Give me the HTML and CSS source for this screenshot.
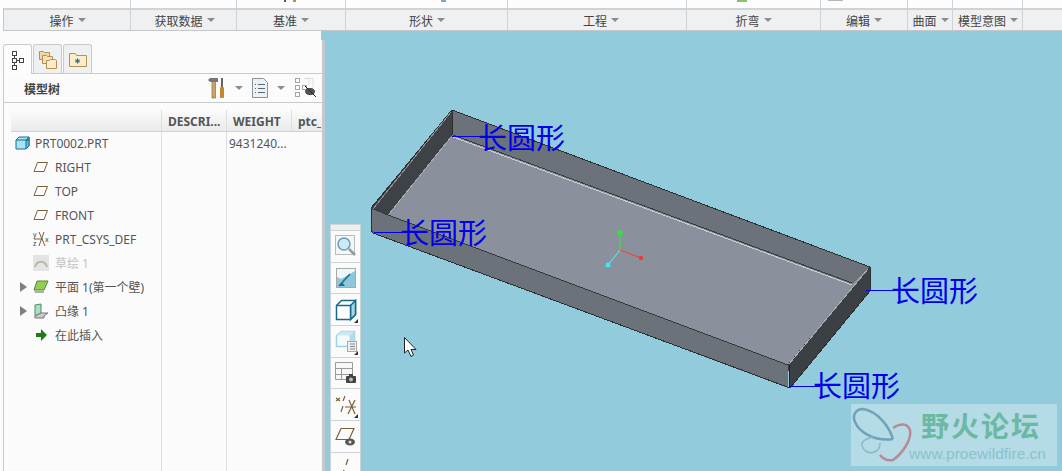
FILE: index.html
```html
<html lang="zh-CN">
<head>
  <meta charset="UTF-8" />
  <title>模型树</title>
  <link rel="stylesheet" href="styles.css">
</head>
<body>
  <div class="ribbon">
    <div class="ribbon-icons">
      <div class="col c1"></div>
      <div class="col c2"></div>
      <div class="col c3"><span class="bit bit-a"></span></div>
      <div class="col c4"><span class="bit bit-b"></span></div>
      <div class="col c5"></div>
      <div class="col c6"><span class="bit bit-c"></span></div>
      <div class="col c7"><span class="bit bit-d"></span></div>
      <div class="col c8"></div>
      <div class="col c9"></div>
      <div class="col c10"></div>
    </div>
    <div class="ribbon-labels">
      <div class="col c1">操作<i class="caret"></i></div>
      <div class="col c2">获取数据<i class="caret"></i></div>
      <div class="col c3">基准<i class="caret"></i></div>
      <div class="col c4">形状<i class="caret"></i></div>
      <div class="col c5">工程<i class="caret"></i></div>
      <div class="col c6">折弯<i class="caret"></i></div>
      <div class="col c7">编辑<i class="caret"></i></div>
      <div class="col c8">曲面<i class="caret"></i></div>
      <div class="col c9">模型意图<i class="caret"></i></div>
      <div class="col c10"></div>
    </div>
  </div>

  <div class="main">
    <div class="side">
      <div class="tabs">
        <div class="tab active">
          <svg width="18" height="20" viewBox="0 0 18 20" fill="none" stroke="#444">
            <rect x="3.5" y="1.5" width="4" height="4"/><rect x="3.5" y="8.5" width="4" height="4"/><rect x="10.5" y="8.5" width="4" height="4"/><rect x="3.5" y="15.5" width="4" height="4"/>
            <path d="M5.5 5.5v3M5.5 12.5v3M7.5 10.5h3"/>
          </svg>
        </div>
        <div class="tab">
          <svg width="22" height="22" viewBox="0 0 22 22" stroke="#b5904f">
            <path d="M2.500 3.500h4l1 1h5v7h-10z" fill="#f1d9a6"/>
            <path d="M5.500 7.500h4l1 1h5v7h-10z" fill="#f4e2ba"/>
            <path d="M9.500 12.500h3l1-1h5l1 1v8h-10z" fill="#fbeccb"/>
          </svg>
        </div>
        <div class="tab">
          <svg width="20" height="18" viewBox="0 0 20 18" stroke="#b5904f">
            <path d="M1.500 3.500h6l1 2h10v11h-17z" fill="#fbeccb"/>
            <path d="M7 11h5M9.500 8.500v5M7.800 9.300l3.400 3.400M11.200 9.300l-3.400 3.400" stroke="#1b6a8c"/>
          </svg>
        </div>
      </div>
      <div class="panel">
        <div class="panel-title">
          <span class="title-text">模型树</span>
          <svg class="tool-hammer" width="18" height="22" viewBox="0 0 18 22">
            <rect x="4" y="4" width="3.500" height="17" fill="#c9a56a" stroke="#7d6238" stroke-width=".6"/>
            <path d="M0 3l2-2h8v4H2z" fill="#777"/>
            <rect x="13" y="1" width="2" height="9" fill="#666"/>
            <rect x="12" y="10" width="4" height="11" rx="1" fill="#c9852c"/>
          </svg>
          <i class="caret tool-caret"></i>
          <svg class="tool-doc" width="16" height="20" viewBox="0 0 16 20" fill="#eef1f3" stroke="#8b9298">
            <path d="M.5.500h11l4 4v15H.5z"/>
            <path d="M6 6.500h7M6 10.500h7M6 14.500h7M3 6.500h1M3 10.500h1M3 14.500h1" stroke="#5c6670"/>
          </svg>
          <i class="caret tool-caret"></i>
          <svg class="tool-eye" width="22" height="22" viewBox="0 0 22 22" fill="none" stroke="#a6a6a6">
            <rect x=".5" y="1.500" width="4" height="4"/><rect x=".5" y="8.500" width="4" height="4"/><rect x=".5" y="15.500" width="4" height="4"/><rect x="7.500" y="8.500" width="4" height="4"/>
            <path d="M9 1.500h9v9M14 1.500v6" stroke="#ddd"/>
            <ellipse cx="15" cy="14.500" rx="4.500" ry="3" fill="#555" stroke="#444"/>
            <path d="M10 9l11 11" stroke="#222"/>
          </svg>
        </div>
        <div class="tree">
          <div class="tree-head">
            <div class="cell name-col"></div>
            <div class="cell desc-col">DESCRI...</div>
            <div class="cell weight-col">WEIGHT</div>
            <div class="cell ptc-col">ptc_</div>
          </div>
          <div class="row root">
            <div class="cell name-col">
              <svg class="node-icon" width="16" height="16" viewBox="0 0 16 16">
                <path d="M1 5l3-3h10v9l-3 3H1z" fill="#a8e2f5" stroke="#1a6e93"/>
                <path d="M11 5h3V2zM11 5v9l3-3V5z" fill="#63bcdc" stroke="#1a6e93"/>
                <path d="M1 5h10" stroke="#1a6e93"/>
              </svg>
              PRT0002.PRT
            </div>
            <div class="cell desc-col"></div>
            <div class="cell weight-col value">9431240...</div>
          </div>
          <div class="row child">
            <div class="cell name-col">
              <svg class="node-icon" width="16" height="12" viewBox="0 0 16 12"><path class="plane" d="M1 10.500L4.500 1.500h10L11 10.500z"/></svg>
              RIGHT
            </div>
            <div class="cell desc-col"></div>
          </div>
          <div class="row child">
            <div class="cell name-col">
              <svg class="node-icon" width="16" height="12" viewBox="0 0 16 12"><path class="plane" d="M1 10.500L4.500 1.500h10L11 10.500z"/></svg>
              TOP
            </div>
            <div class="cell desc-col"></div>
          </div>
          <div class="row child">
            <div class="cell name-col">
              <svg class="node-icon" width="16" height="12" viewBox="0 0 16 12"><path class="plane" d="M1 10.500L4.500 1.500h10L11 10.500z"/></svg>
              FRONT
            </div>
            <div class="cell desc-col"></div>
          </div>
          <div class="row child">
            <div class="cell name-col">
              <svg class="node-icon" width="16" height="16" viewBox="0 0 16 16" fill="none" stroke="#7a6236">
                <path d="M6 1l6 14M11 1L6 15M1 8h9"/>
                <text x="0" y="6" class="axis-letter">y</text>
                <text x="0" y="15" class="axis-letter">z</text>
                <text x="12" y="11" class="axis-letter">x</text>
              </svg>
              PRT_CSYS_DEF
            </div>
            <div class="cell desc-col"></div>
          </div>
          <div class="row child dim">
            <div class="cell name-col">
              <svg class="node-icon" width="16" height="16" viewBox="0 0 16 16">
                <rect width="16" height="16" fill="#e4e4e4"/>
                <path d="M2 12C4 5 12 5 14 12" fill="none" stroke="#bdb8a8" stroke-width="2"/>
              </svg>
              草绘 1
            </div>
            <div class="cell desc-col"></div>
          </div>
          <div class="row child">
            <div class="cell name-col">
              <i class="expand"></i>
              <svg class="node-icon" width="16" height="14" viewBox="0 0 16 14">
                <path d="M4 1h11l-4 9H1z" fill="#8fd14f" stroke="#5f7f45"/>
                <path d="M1 10h10v3H2z" fill="#a9b5a0"/>
              </svg>
              平面 1(第一个壁)
            </div>
            <div class="cell desc-col"></div>
          </div>
          <div class="row child">
            <div class="cell name-col">
              <i class="expand"></i>
              <svg class="node-icon" width="16" height="16" viewBox="0 0 16 16">
                <path d="M2 2l6-1v9l-6 3z" fill="#a8e0c0" stroke="#4f8a6a"/>
                <path d="M2 13l6-3h7l-4 3v2H2z" fill="#c9ccc6" stroke="#777"/>
              </svg>
              凸缘 1
            </div>
            <div class="cell desc-col"></div>
          </div>
          <div class="row child">
            <div class="cell name-col">
              <svg class="node-icon" width="16" height="12" viewBox="0 0 16 12"><path d="M3 4h5V0l6 6-6 6V8H3z" fill="#1d7d12"/></svg>
              在此插入
            </div>
            <div class="cell desc-col"></div>
          </div>
          <div class="row filler">
            <div class="cell name-col"></div>
            <div class="cell desc-col"></div>
          </div>
        </div>
      </div>
    </div>

    <div class="viewport">
      <svg class="scene" width="737" height="440" viewBox="325 31 737 440">
        <!-- sheet metal part -->
        <g shape-rendering="crispEdges">
          <polygon points="452,110 870,267 852,284 452,135" fill="#6b7279"/>
          <polygon points="452,110 452,135 388,215 371,208" fill="#3e4146"/>
          <polygon points="452,135 852,284 870,267 788,365 388,215" fill="#8a919c"/>
          <polygon points="371,208 388,215 788,365 788,388 373,233 371,230" fill="#6b7279"/>
          <polygon points="870,267 870,291 790,388 788,365" fill="#3c3f44"/>
          <path d="M452,110 L870,267 L870,291 L790,388 L373,233 L371,230 L371,208 Z" fill="none" stroke="#2c2e31"/>
          <path d="M371,208 L388,215 L788,365 L870,267" fill="none" stroke="#33363a"/>
          <path d="M373,209 L451,112" stroke="#8d9196" fill="none"/>
          <path d="M389,214 L451,137" stroke="#a9adb2" fill="none"/>
          <path d="M452,110 V135" stroke="#2c2e31"/>
          <path d="M453,137 L852,285" stroke="#c9ccd0"/>
          <path d="M453,135 L852,283" stroke="#3a3d41"/>
          <path d="M789,364 L868,269" stroke="#a9adb2"/>
          <path d="M789,365 V388" stroke="#1f2023"/>
        </g>
        <!-- triad -->
        <path d="M620,250 V233" stroke="#3ee04a" stroke-width="1.200"/>
        <path d="M620,250 L641,258" stroke="#ee4444" stroke-width="1.200"/>
        <path d="M620,250 L608,265" stroke="#55dfe8" stroke-width="1.200"/>
        <circle cx="620" cy="233" r="2.800" fill="#35e040"/>
        <circle cx="641" cy="258" r="2.200" fill="#f03a3a"/>
        <circle cx="608" cy="265" r="2.500" fill="#3ee8ee"/>
        <!-- leaders and labels -->
        <g stroke="#0000ee">
          <path d="M452,136.500 H486"/>
          <path d="M374,232.500 H406"/>
          <path d="M866,290.500 H896"/>
          <path d="M790,386.500 H820"/>
        </g>
        <g class="callout">
          <text x="478" y="149">长圆形</text>
          <text x="400" y="244">长圆形</text>
          <text x="891" y="302">长圆形</text>
          <text x="813" y="397">长圆形</text>
        </g>
        <!-- cursor -->
        <path d="M404.500,337.500 V353 L408,350 L411,356.500 L413.500,355 L411,349.500 H416 Z" fill="#fff" stroke="#222"/>
      </svg>

      <div class="view-tools">
        <div class="view-tools-head"></div>
        <div class="vt">
          <svg width="22" height="22" viewBox="0 0 22 22">
            <rect x=".5" y=".5" width="19" height="19" fill="#f4f6f7" stroke="#b9bcbf"/>
            <circle cx="9" cy="9" r="6" fill="#cbeaf5" stroke="#6f9db3" stroke-width="1.500"/>
            <path d="M14 14l6 6" stroke="#999" stroke-width="2.500"/>
          </svg>
        </div>
        <div class="vt">
          <svg width="22" height="22" viewBox="0 0 22 22">
            <rect x="1.500" y="1.500" width="19" height="19" fill="#8ec7d8" stroke="#a9a9a9"/>
            <path d="M2 2h18v2L6 12 2 10z" fill="#eef7fa"/>
            <path d="M4 19L15 7" stroke="#1a6e93" stroke-width="1.500"/>
            <path d="M4 19h6l-3-4z" fill="#1a6e93"/>
          </svg>
        </div>
        <div class="vt corner">
          <svg width="22" height="22" viewBox="0 0 22 22" fill="#fff" stroke="#17688b" stroke-width="1.500">
            <path d="M1.500 6.500l5-5h14v14l-5 5h-14z"/>
            <path d="M15.500 6.500l5-5v14l-5 5z" fill="#a5d6e6"/>
            <path d="M1.500 6.500h14v14"/>
          </svg>
        </div>
        <div class="vt corner">
          <svg width="22" height="22" viewBox="0 0 22 22">
            <path d="M1.500 5.500l5-4h13v15h-18z" fill="#f2fafc" stroke="#9fd2e2" stroke-width="1.500"/>
            <path d="M1.500 5.500l5-4h13l-5 4z" fill="#cfe9f2"/>
            <path d="M14.500 5.500l5-4v11h-5z" fill="#b5dcea"/>
            <rect x="12.500" y="11.500" width="9" height="10" fill="#eee" stroke="#aaa"/>
            <path d="M15 14h5M15 16.500h5M15 19h5" stroke="#888"/>
          </svg>
        </div>
        <div class="vt">
          <svg width="22" height="22" viewBox="0 0 22 22">
            <path d="M.5.500h17v17H.5zM.5 6.500h17M.5 12.500h17M6.500 6.500v11" fill="#f7f7f7" stroke="#9a9a9a"/>
            <rect x="11" y="14" width="10" height="7" rx="1" fill="#444"/>
            <rect x="14" y="12" width="4" height="2" fill="#444"/>
            <circle cx="16" cy="17.500" r="2" fill="#bbb"/>
          </svg>
        </div>
        <div class="vt corner">
          <svg width="22" height="22" viewBox="0 0 22 22" fill="none" stroke="#7a6236" stroke-width="1.200">
            <path d="M10 2l-2 5M8 12l-2 6M1 4l4 3M5 4L1 7"/>
            <path d="M14 6l6 14M20 6l-7 14M10 13h11"/>
          </svg>
        </div>
        <div class="vt">
          <svg width="22" height="22" viewBox="0 0 22 22">
            <path d="M1 14.500L6 3.500h13l-5 11z" fill="none" stroke="#7a6236" stroke-width="1.200"/>
            <ellipse cx="15" cy="17" rx="5" ry="3.500" fill="#555"/>
            <circle cx="15" cy="17" r="1.500" fill="#ddd"/>
          </svg>
        </div>
        <div class="vt">
          <svg width="22" height="22" viewBox="0 0 22 22" fill="none" stroke="#7a6236" stroke-width="1.200">
            <path d="M13 2l-2 6M9 13l-2 6"/>
            <ellipse cx="15" cy="19" rx="5" ry="3" fill="#555" stroke="none"/>
          </svg>
        </div>
      </div>

      <div class="watermark">
        <svg class="wm-logo" width="62" height="60" viewBox="0 0 62 60" fill="none">
          <path d="M42 35C38 22 26 7 12 5 5 5 1 11 4 18c4 10 20 20 38 17" stroke="#6ea3ba" stroke-width="2.500"/>
          <path d="M42 24c6-4 14-6 17 2 2 9-7 23-17 30-5 1-10-1-13-5" stroke="#b78b96" stroke-width="2.500"/>
          <path d="M22 33c-5 1-12 4-11 8 1 6 7 9 12 7 4-1 6-5 6-9" stroke="#8cb8c8" stroke-width="1.500"/>
        </svg>
        <div class="wm-text">
          <div class="wm-title">野火论坛</div>
          <div class="wm-url">www.proewildfire.cn</div>
        </div>
      </div>
    </div>
  </div>
</body>
</html>
```

FILE: styles.css
```css
* {
  margin: 0;
  padding: 0;
  box-sizing: border-box;
}

body {
  width: 1062px;
  height: 471px;
  overflow: hidden;
  display: flex;
  flex-direction: column;
  background: #fdfdfd;
  font-family: "Noto Sans", "Noto Sans CJK SC", sans-serif;
  font-size: 12px;
  color: #555;
}

/* ribbon */
.ribbon {
  height: 31px;
  padding-left: 3px;
  flex-shrink: 0;
}

.ribbon-icons {
  display: flex;
  height: 8px;
  padding-left: 1px;
}

.ribbon-labels {
  display: flex;
  height: 23px;
  background: #eef0f2;
  border-top: 2px solid #d0d3d5;
  border-bottom: 1px solid #c4c7ca;
  border-left: 1px solid #c4c7ca;
  font-family: "Noto Sans CJK SC", sans-serif;
  font-size: 12px;
  color: #444;
}

.col {
  border-right: 1px solid #d0d3d5;
  display: flex;
  align-items: center;
  justify-content: center;
  position: relative;
  flex-shrink: 0;
}

.c1 { width: 127px; padding-left: 1px; }
.c2 { width: 106px; padding-left: 2px; }
.c3 { width: 109px; }
.c4 { width: 162px; padding-left: 1px; }
.c5 { width: 179px; padding-left: 8px; }
.c6 { width: 134px; }
.c7 { width: 87px; }
.c8 { width: 45px; padding-left: 1px; }
.c9 { width: 70px; padding-left: 1px; }
.c10 { width: 39px; border-right: none; }

.caret {
  display: inline-block;
  width: 0;
  height: 0;
  margin-left: 4px;
  border-left: 4px solid transparent;
  border-right: 4px solid transparent;
  border-top: 4px solid #8c8c8c;
}

.bit {
  position: absolute;
  top: 0;
  height: 2px;
}

.bit-a { left: 47px; width: 12px; background: linear-gradient(90deg, #555 0 2px, transparent 2px 9px, #c08a4a 9px); }
.bit-b { left: 95px; width: 5px; background: #7aa6c8; }
.bit-c { left: 50px; width: 10px; background: #8cc06a; }
.bit-d { left: 7px; width: 15px; height: 1px; background: #b5b5b5; }

/* left panel */
.main {
  flex: 1;
  display: flex;
  min-height: 0;
}

.side {
  width: 325px;
  flex-shrink: 0;
  padding: 13px 0 0 3px;
  position: relative;
  background: #fbfbfb;
  border-right: 3px solid #c6c9cc;
  display: flex;
  flex-direction: column;
}

.side::before {
  content: "";
  position: absolute;
  top: 0;
  right: -3px;
  width: 4px;
  height: 9px;
  background: #92cbdc;
}

.tabs {
  display: flex;
  height: 29px;
  gap: 1px;
}

.tab {
  width: 29px;
  height: 29px;
  display: flex;
  align-items: center;
  justify-content: center;
  background: #eef0f1;
  border: 1px solid #c8cbce;
  border-bottom: none;
  border-radius: 3px 3px 0 0;
}

.tab.active {
  height: 30px;
  background: #fdfdfd;
  position: relative;
  z-index: 1;
}

.panel {
  flex: 1;
  display: flex;
  flex-direction: column;
  min-height: 0;
  border-top: 1px solid #c8cbce;
  border-left: 1px solid #c8cbce;
}

.panel-title {
  height: 29px;
  flex-shrink: 0;
  display: flex;
  align-items: center;
  padding-left: 20px;
  border-bottom: 1px solid #c8cbce;
}

.title-text {
  width: 184px;
  font-family: "Noto Sans CJK SC", sans-serif;
  font-weight: 700;
  color: #444;
}

.tool-caret {
  margin: 0 9px 0 9px;
}

.tool-eye {
  margin-left: 1px;
}

/* tree table */
.tree {
  flex: 1;
  display: flex;
  flex-direction: column;
  min-height: 0;
  margin-top: 7px;
  padding-left: 7px;
}

.tree-head {
  display: flex;
  height: 22px;
  flex-shrink: 0;
  background: linear-gradient(#fbfbfb, #e9eaeb);
  border-bottom: 1px solid #cfd1d3;
  font-weight: 700;
  color: #555;
}

.cell {
  display: flex;
  align-items: center;
  flex-shrink: 0;
  white-space: nowrap;
  overflow: hidden;
}

.tree-head .cell {
  padding-top: 1px;
}

.row .cell {
  padding-bottom: 2px;
}

.name-col {
  width: 151px;
  border-right: 1px solid #dcdee0;
}

.desc-col {
  width: 65px;
  padding-left: 6px;
  border-right: 1px solid #dcdee0;
}

.weight-col {
  width: 65px;
  padding-left: 6px;
  border-right: 1px solid #dcdee0;
}

.ptc-col {
  width: 29px;
  padding-left: 6px;
}

.row {
  display: flex;
  height: 24px;
  flex-shrink: 0;
}

.weight-col.value {
  padding-left: 2px;
  border-right: none;
  font-weight: 400;
}

.root .name-col {
  padding-left: 4px;
}

.root .node-icon {
  margin-right: 4px;
}

.child .name-col {
  padding-left: 22px;
  position: relative;
}

.node-icon {
  margin-right: 6px;
  flex-shrink: 0;
}

.plane {
  fill: none;
  stroke: #7a6236;
}

.axis-letter {
  font-size: 7px;
  fill: #444;
  stroke: none;
}

.dim {
  color: #c2c2c2;
}

.expand {
  position: absolute;
  left: 9px;
  top: 6px;
  width: 0;
  height: 0;
  border-top: 5px solid transparent;
  border-bottom: 5px solid transparent;
  border-left: 7px solid #808080;
}

.row.filler {
  flex: 1;
  height: auto;
}

/* graphics window */
.viewport {
  flex: 1;
  position: relative;
  background: #92cbdc;
  overflow: hidden;
}

.scene {
  display: block;
}

.callout text {
  font-family: "Noto Sans CJK SC", sans-serif;
  font-size: 29px;
  fill: #0000ee;
}

.view-tools {
  position: absolute;
  left: 5px;
  top: 193px;
  width: 31px;
  background: #fbfbfb;
  border: 1px solid #d0d3d5;
  border-bottom: none;
}

.view-tools-head {
  height: 5px;
  background: #eceeef;
}

.vt {
  height: 31.700px;
  display: flex;
  align-items: center;
  justify-content: center;
  border-top: 1px solid #d0d3d5;
  position: relative;
}

.vt.corner::after {
  content: "";
  position: absolute;
  right: 2px;
  bottom: 2px;
  border-left: 4px solid transparent;
  border-bottom: 4px solid #333;
}

.watermark {
  position: absolute;
  left: 526px;
  top: 373px;
  width: 206px;
  height: 62px;
  display: flex;
  background: #b4dbe6;
}

.wm-logo {
  flex-shrink: 0;
}

.wm-text {
  margin-left: -4px;
  padding-top: 1px;
}

.wm-title {
  height: 40px;
  margin-left: 12px;
  font-family: "Noto Sans CJK SC", sans-serif;
  font-size: 28px;
  font-weight: 700;
  letter-spacing: 2px;
  line-height: 40px;
  color: #6cb9a3;
  white-space: nowrap;
}

.wm-url {
  font-family: "Liberation Sans", sans-serif;
  font-size: 15.500px;
  line-height: 18px;
  color: #8cc2cf;
  white-space: nowrap;
}
```
